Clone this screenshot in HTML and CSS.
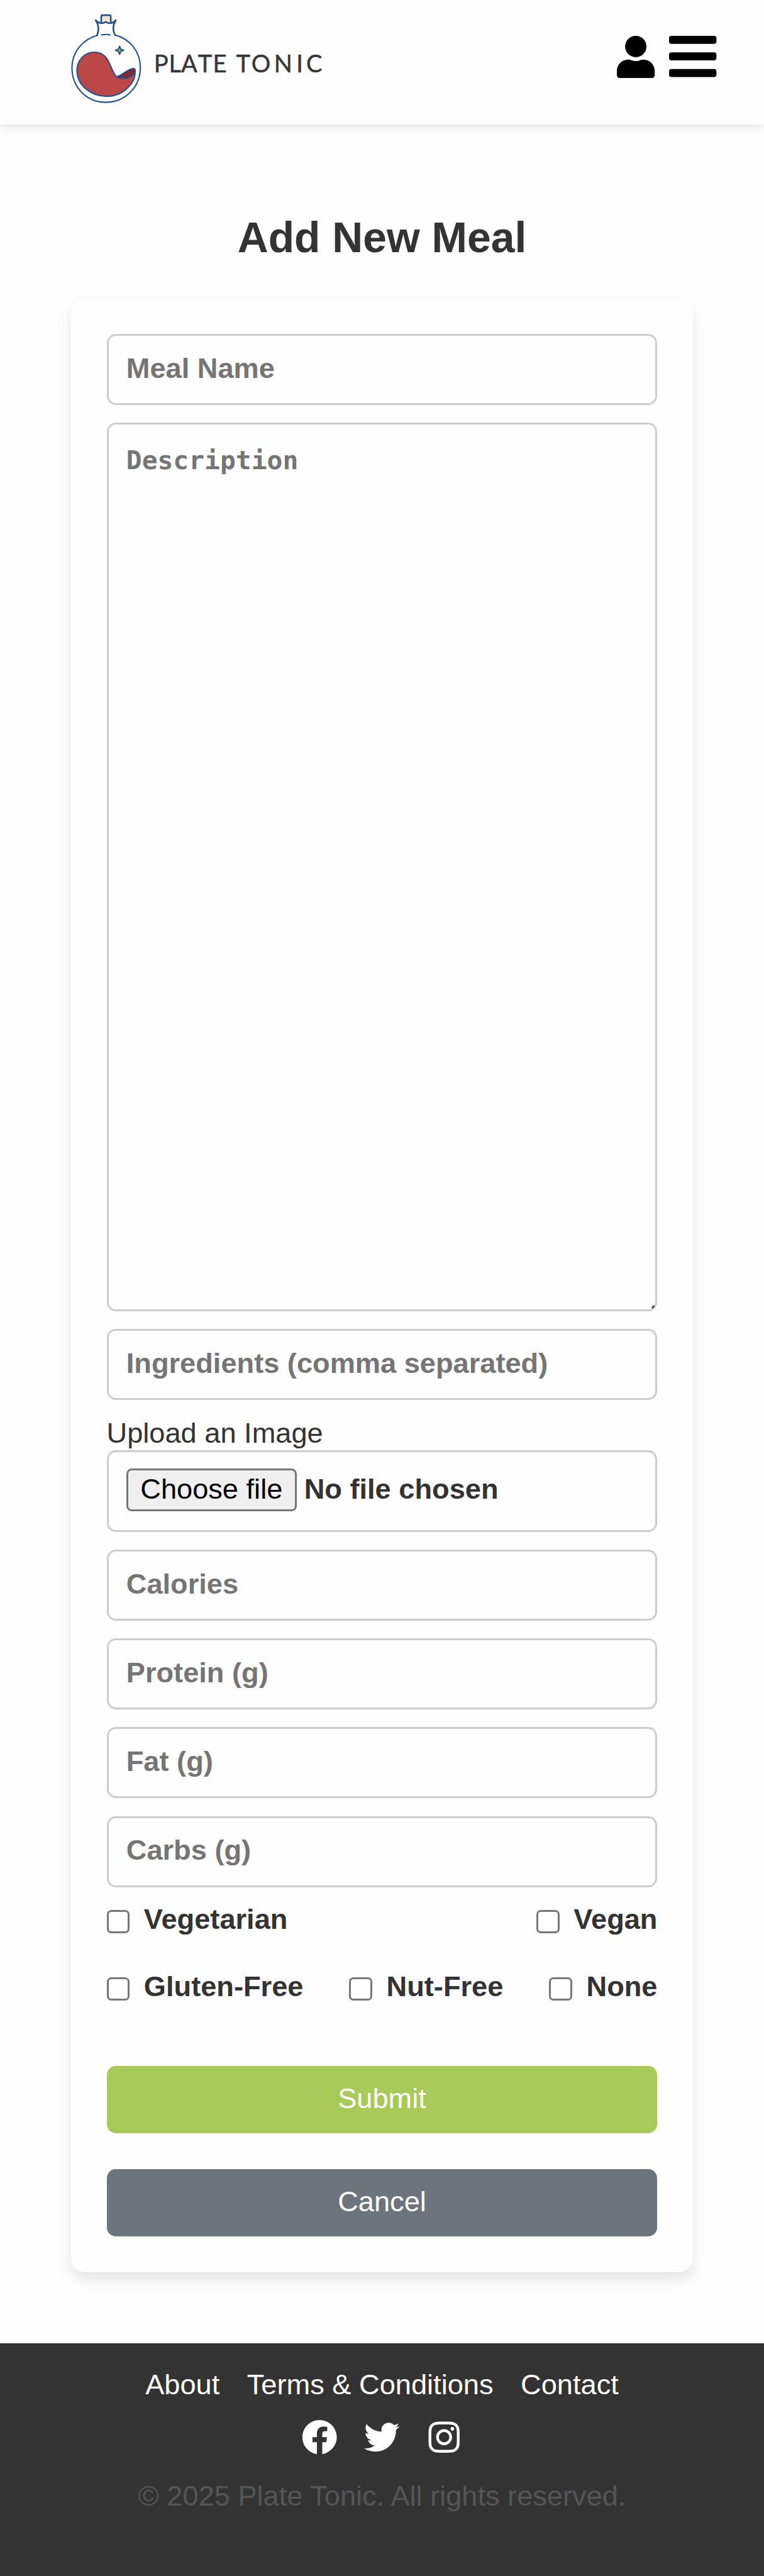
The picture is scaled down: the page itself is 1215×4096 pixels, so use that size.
FILE: index.html
```html
<!DOCTYPE html>
<html lang="en">
<head>
<meta charset="utf-8">
<title>Add New Meal | Plate Tonic</title>
<link rel="stylesheet" href="styles.css">
</head>
<body>
<header class="site-header">
  <svg class="logo" viewBox="120 20 425 160" role="img" aria-label="Plate Tonic">
    <g fill="none" stroke="#20508f" stroke-width="2.200" stroke-linecap="round" stroke-linejoin="round">
      <path d="M171 37V27.500q0-2 2-2h12q2 0 2 2V37" fill="#f3e6cc" stroke-width="2.800"/>
      <path d="M194.300 59C219 65 237 87 237 114c0 33-26 58.500-58.500 58.500S121.500 147 121.500 114c0-26 18-47.500 42.500-54.500"/>
      <path d="M164 59.500C167.500 50 167.500 42 161.500 34c4 4.500 8 5.500 13 4.500 2 0 2.500-1.500 4.200-1.500s2.200 1.500 4.200 1.500c5 1 9 0 12.600-4.500-5 8-6 16-1.200 25.200" fill="#fefefe" stroke-width="2.800"/>
      <path d="M171.500 58.700q7-1.400 14.500 0"/>
      <path d="M196.700 129.300C203 133.500 216 133 222 126.700c3.500-3.500 5-5 6-8C230 139 209 162.500 180 162.500c-28 0-50-20-50-43.500 0-17 12-31 30-31 26 0 25 30 36.700 41.300z" fill="#bc4747"/>
      <path d="M197 129.300C208 127 216 115.500 225 115.500c3.500 0 4 3 2.500 6-4.500 10-18 12.500-30.500 7.800z" fill="#7d2a30"/>
      <path d="M202 78l2 5 5 1.700-5 1.800-2 5-2-5-5-1.800 5-1.700z" fill="#a7ca59"/>
    </g>
    <text class="wordmark" y="122" x="260 285 305.800 334.300 359.500 398.800 424.500 462.700 500.500 517">PLATETONIC</text>
  </svg>
  <nav class="header-actions">
    <svg class="icon-user" viewBox="0 0 64 72" aria-label="Account"><circle cx="32" cy="18" r="18"/><path d="M0 60C0 49 8 40 19 40c5 0 7 2.500 13 2.500S40 40 45 40c11 0 19 9 19 20v5q0 7-7 7H7q-7 0-7-7z"/></svg>
    <svg class="icon-menu" viewBox="0 0 80 70" aria-label="Menu"><rect width="80" height="13.500" rx="4"/><rect y="28" width="80" height="13.500" rx="4"/><rect y="56" width="80" height="13.500" rx="4"/></svg>
  </nav>
</header>
<main class="page">
  <h1 class="page-title">Add New Meal</h1>
  <form class="meal-form">
    <input class="field" type="text" placeholder="Meal Name">
    <div class="description-wrap">
      <textarea class="field description" placeholder="Description"></textarea>
      <svg class="grip" viewBox="0 0 6 6"><path d="M2 4L4 2" /></svg>
    </div>
    <input class="field" type="text" placeholder="Ingredients (comma separated)">
    <div class="upload">
      <div class="upload-label">Upload an Image</div>
      <div class="field file-field"><span class="file-button">Choose file</span><span class="file-name">No file chosen</span></div>
    </div>
    <input class="field" type="text" placeholder="Calories">
    <input class="field" type="text" placeholder="Protein (g)">
    <input class="field" type="text" placeholder="Fat (g)">
    <input class="field" type="text" placeholder="Carbs (g)">
    <div class="diets">
      <div class="diet-row">
        <label class="diet"><input class="check" type="checkbox">Vegetarian</label>
        <label class="diet"><input class="check" type="checkbox">Vegan</label>
      </div>
      <div class="diet-row">
        <label class="diet"><input class="check" type="checkbox">Gluten-Free</label>
        <label class="diet"><input class="check" type="checkbox">Nut-Free</label>
        <label class="diet"><input class="check" type="checkbox">None</label>
      </div>
    </div>
    <div class="buttons">
      <button class="button submit" type="button">Submit</button>
      <button class="button cancel" type="button">Cancel</button>
    </div>
  </form>
</main>
<footer class="site-footer">
  <nav class="footer-links"><a>About</a><a>Terms &amp; Conditions</a><a>Contact</a></nav>
  <div class="social">
    <svg viewBox="0 0 512 512" aria-label="Facebook"><path d="M504 256C504 119 393 8 256 8S8 119 8 256c0 123.780 90.690 226.380 209.250 245V327.690h-63V256h63v-54.640c0-62.150 37-96.480 93.670-96.480 27.140 0 55.520 4.840 55.520 4.840v61h-31.280c-30.800 0-40.410 19.120-40.410 38.730V256h68.780l-11 71.690h-57.780V501C413.310 478.380 504 375.780 504 256z"/></svg>
    <svg viewBox="0 0 512 512" aria-label="Twitter"><path d="M459.370 151.716c.325 4.548.325 9.097.325 13.645 0 138.720-105.583 298.558-298.558 298.558-59.452 0-114.680-17.219-161.137-47.106 8.447.974 16.568 1.299 25.340 1.299 49.055 0 94.213-16.568 130.274-44.832-46.132-.975-84.792-31.188-98.112-72.772 6.498.974 12.995 1.624 19.818 1.624 9.421 0 18.843-1.300 27.614-3.573-48.081-9.747-84.143-51.980-84.143-102.985v-1.299c13.969 7.797 30.214 12.670 47.431 13.319-28.264-18.843-46.781-51.005-46.781-87.391 0-19.492 5.197-37.360 14.294-52.954 51.655 63.675 129.300 105.258 216.365 109.807-1.624-7.797-2.599-15.918-2.599-24.040 0-57.828 46.782-104.934 104.934-104.934 30.213 0 57.502 12.670 76.670 33.137 23.715-4.548 46.456-13.320 66.599-25.340-7.798 24.366-24.366 44.833-46.132 57.827 21.117-2.273 41.584-8.122 60.426-16.243-14.292 20.791-32.161 39.308-52.628 54.253z"/></svg>
    <svg viewBox="-32 0 512 512" aria-label="Instagram"><path d="M224.100 141c-63.600 0-114.900 51.300-114.900 114.900s51.300 114.900 114.900 114.900S339 319.500 339 255.900 287.700 141 224.100 141zm0 189.600c-41.100 0-74.700-33.500-74.700-74.700s33.500-74.700 74.700-74.700 74.700 33.500 74.700 74.700-33.600 74.700-74.700 74.700zm146.400-194.300c0 14.900-12 26.800-26.800 26.800-14.900 0-26.800-12-26.800-26.800s12-26.800 26.800-26.800 26.800 12 26.800 26.800zm76.100 27.200c-1.700-35.900-9.900-67.700-36.200-93.900-26.200-26.200-58-34.400-93.900-36.200-37-2.100-147.900-2.100-184.900 0-35.800 1.700-67.600 9.900-93.900 36.100s-34.400 58-36.200 93.900c-2.100 37-2.100 147.900 0 184.900 1.700 35.900 9.900 67.700 36.200 93.900s58 34.400 93.900 36.200c37 2.100 147.900 2.100 184.900 0 35.900-1.700 67.700-9.900 93.900-36.200 26.200-26.200 34.400-58 36.200-93.900 2.100-37 2.100-147.800 0-184.800zM398.800 388c-7.800 19.600-22.900 34.700-42.600 42.600-29.500 11.700-99.500 9-132.100 9s-102.700 2.600-132.100-9c-19.600-7.800-34.700-22.900-42.600-42.600-11.700-29.500-9-99.500-9-132.100s-2.600-102.700 9-132.100c7.800-19.600 22.900-34.700 42.600-42.600 29.500-11.700 99.500-9 132.100-9s102.700-2.600 132.100 9c19.600 7.800 34.700 22.900 42.600 42.600 11.700 29.500 9 99.500 9 132.100s2.700 102.700-9 132.100z"/></svg>
  </div>
  <p class="copyright">© 2025 Plate Tonic. All rights reserved.</p>
</footer>
</body>
</html>
```
FILE: styles.css
```css
* { box-sizing: border-box; }
html { font-size: 28.2558px; }
body {
  margin: 0;
  height: 4096px;
  display: flex;
  flex-direction: column;
  background: #fefefe;
  color: #333;
  font: 1.6rem/1.8rem "Liberation Sans", Arial, sans-serif;
}
.site-header {
  flex: none;
  height: 7rem;
  padding: .667rem 2.667rem 0 4rem;
  display: flex;
  justify-content: space-between;
  align-items: flex-start;
  background: #fefefe;
  box-shadow: 0 .2rem .5rem rgba(0, 0, 0, .1);
}
.logo { width: 14.167rem; height: 5.333rem; }
.wordmark { font: 400 40.500px Lato, sans-serif; fill: #373737; stroke: #373737; stroke-width: .5px; }
.header-actions { display: flex; gap: .8rem; padding-top: 1.333rem; }
.icon-user { width: 2.133rem; height: 2.400rem; }
.icon-menu { width: 2.667rem; height: 2.333rem; margin-top: .033rem; }
.page { flex: none; padding: 5.167rem 4rem 4rem; }
.page-title { margin: 0 0 2.233rem; font-size: 2.4rem; line-height: 2.4rem; text-align: center; }
.meal-form {
  display: flex;
  flex-direction: column;
  gap: 1rem;
  padding: 2rem;
  background: #fefefe;
  border-radius: .8rem;
  box-shadow: 0 .4rem .8rem rgba(0, 0, 0, .1);
}
.field {
  display: block;
  width: 100%;
  height: 4rem;
  margin: 0;
  padding: 0 1rem .12rem;
  border: 3px solid #ccc;
  border-radius: .5rem;
  background: #fefefe;
  color: #333;
  font: bold 1.6rem "Liberation Sans", Arial, sans-serif;
}
.field::placeholder { color: #757575; opacity: 1; }
.description-wrap { position: relative; }
.description {
  height: 50rem;
  padding-top: 1.07rem;
  resize: none;
  font: bold 1.462rem/1.9rem "DejaVu Sans Mono", monospace;
}
.grip { position: absolute; right: .15rem; bottom: .15rem; width: .2rem; height: .2rem; fill: none; stroke: #555; stroke-width: 3.5; stroke-linecap: round; }
.upload-label { height: 1.8rem; line-height: 1.72rem; }
.file-field { height: 4.6rem; display: flex; align-items: center; gap: .42rem; }
.file-button {
  height: 2.4rem;
  padding: 0 .69rem;
  border: 3px solid #767676;
  border-radius: .3rem;
  background: #efefef;
  color: #000;
  font-weight: normal;
  line-height: 2.1rem;
}
.file-name { line-height: 2.3rem; }
.diets { display: flex; flex-direction: column; gap: 2rem; margin-top: -.07rem; }
.diet-row { display: flex; justify-content: space-between; }
.diet { display: flex; align-items: center; gap: .8rem; font-weight: bold; }
.check {
  appearance: none;
  width: 1.3rem;
  height: 1.3rem;
  margin: .2rem 0 0;
  border: 3px solid #767676;
  border-radius: .25rem;
  background: #fff;
}
.buttons { display: flex; flex-direction: column; gap: 2rem; margin-top: 2.537rem; }
.button {
  height: 3.8rem;
  padding: 0 0 .1rem;
  border: 0;
  border-radius: .5rem;
  color: #fff;
  font: 1.6rem "Liberation Sans", Arial, sans-serif;
}
.submit { background: #a7ca59; }
.cancel { background: #6c757d; }
.site-footer {
  flex: 1;
  display: flex;
  flex-direction: column;
  align-items: center;
  padding-top: 1.45rem;
  background: #333;
  color: #fff;
}
.footer-links { display: flex; gap: 1.54rem; }
.social { display: flex; gap: 1.5rem; margin-top: 1.05rem; }
.social svg { width: 2rem; height: 2rem; fill: #fff; }
.copyright { margin: 1.43rem 0 0; color: #555; }
```
